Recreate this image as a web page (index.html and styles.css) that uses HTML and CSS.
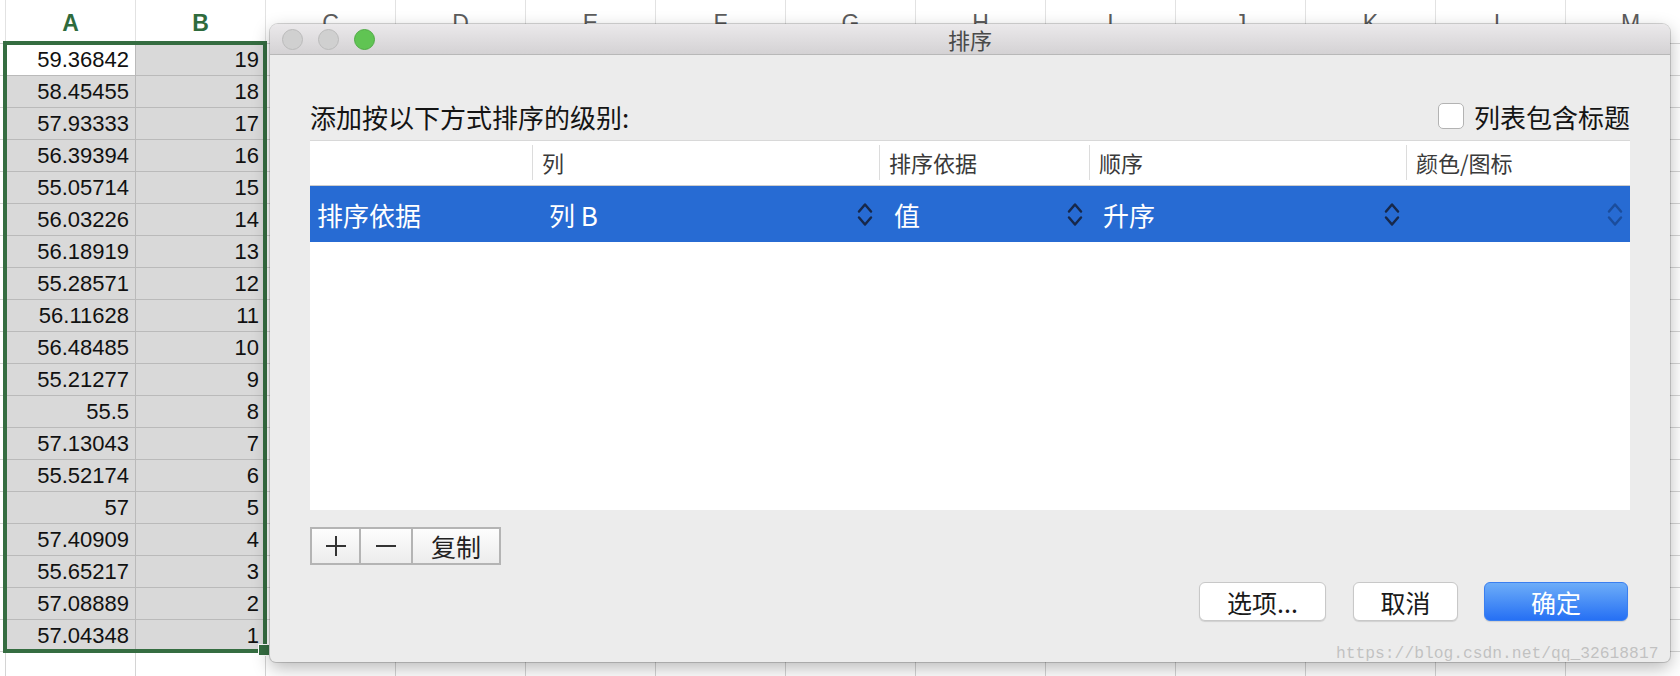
FILE: index.html
```html
<!DOCTYPE html>
<html lang="zh">
<head>
<meta charset="utf-8">
<title>排序</title>
<link rel="stylesheet" href="styles.css">
</head>
<body>
<div class="sheet">
  <div class="hrow">
    <div class="edge"></div>
    <div class="ch on">A</div><div class="ch on">B</div><div class="ch">C</div><div class="ch">D</div><div class="ch">E</div><div class="ch">F</div><div class="ch">G</div><div class="ch">H</div><div class="ch">I</div><div class="ch">J</div><div class="ch">K</div><div class="ch">L</div><div class="ch">M</div>
  </div>
  <div class="row sel"><div class="edge"></div><div class="cell active">59.36842</div><div class="cell">19</div><div class="rest"></div></div>
  <div class="row sel"><div class="edge"></div><div class="cell">58.45455</div><div class="cell">18</div><div class="rest"></div></div>
  <div class="row sel"><div class="edge"></div><div class="cell">57.93333</div><div class="cell">17</div><div class="rest"></div></div>
  <div class="row sel"><div class="edge"></div><div class="cell">56.39394</div><div class="cell">16</div><div class="rest"></div></div>
  <div class="row sel"><div class="edge"></div><div class="cell">55.05714</div><div class="cell">15</div><div class="rest"></div></div>
  <div class="row sel"><div class="edge"></div><div class="cell">56.03226</div><div class="cell">14</div><div class="rest"></div></div>
  <div class="row sel"><div class="edge"></div><div class="cell">56.18919</div><div class="cell">13</div><div class="rest"></div></div>
  <div class="row sel"><div class="edge"></div><div class="cell">55.28571</div><div class="cell">12</div><div class="rest"></div></div>
  <div class="row sel"><div class="edge"></div><div class="cell">56.11628</div><div class="cell">11</div><div class="rest"></div></div>
  <div class="row sel"><div class="edge"></div><div class="cell">56.48485</div><div class="cell">10</div><div class="rest"></div></div>
  <div class="row sel"><div class="edge"></div><div class="cell">55.21277</div><div class="cell">9</div><div class="rest"></div></div>
  <div class="row sel"><div class="edge"></div><div class="cell">55.5</div><div class="cell">8</div><div class="rest"></div></div>
  <div class="row sel"><div class="edge"></div><div class="cell">57.13043</div><div class="cell">7</div><div class="rest"></div></div>
  <div class="row sel"><div class="edge"></div><div class="cell">55.52174</div><div class="cell">6</div><div class="rest"></div></div>
  <div class="row sel"><div class="edge"></div><div class="cell">57</div><div class="cell">5</div><div class="rest"></div></div>
  <div class="row sel"><div class="edge"></div><div class="cell">57.40909</div><div class="cell">4</div><div class="rest"></div></div>
  <div class="row sel"><div class="edge"></div><div class="cell">55.65217</div><div class="cell">3</div><div class="rest"></div></div>
  <div class="row sel"><div class="edge"></div><div class="cell">57.08889</div><div class="cell">2</div><div class="rest"></div></div>
  <div class="row sel"><div class="edge"></div><div class="cell">57.04348</div><div class="cell">1</div><div class="rest"></div></div>
  <div class="row"><div class="edge"></div><div class="cell"></div><div class="cell"></div><div class="rest"></div></div>
</div>

<div class="selection"><div class="handle"></div></div>

<div class="dialog">
  <div class="titlebar">
    <div class="lights"><span class="light"></span><span class="light"></span><span class="light green"></span></div>
    <div class="title">排序</div>
    <div></div>
  </div>
  <div class="body">
    <div class="top">
      <div class="heading">添加按以下方式排序的级别:</div>
      <div class="check"><span class="box"></span><span>列表包含标题</span></div>
    </div>
    <div class="table">
      <div class="thead">
        <div class="th c0"></div>
        <div class="th c1">列</div>
        <div class="th c2">排序依据</div>
        <div class="th c3">顺序</div>
        <div class="th c4">颜色/图标</div>
      </div>
      <div class="tr">
        <div class="td c0">排序依据</div>
        <div class="td c1"><span>列 B</span><svg class="updown" viewBox="0 0 16 28" width="16" height="28"><polyline points="2,11.5 8,4.5 14,11.5"/><polyline points="2,17.5 8,24.5 14,17.5"/></svg></div>
        <div class="td c2"><span>值</span><svg class="updown" viewBox="0 0 16 28" width="16" height="28"><polyline points="2,11.5 8,4.5 14,11.5"/><polyline points="2,17.5 8,24.5 14,17.5"/></svg></div>
        <div class="td c3"><span>升序</span><svg class="updown" viewBox="0 0 16 28" width="16" height="28"><polyline points="2,11.5 8,4.5 14,11.5"/><polyline points="2,17.5 8,24.5 14,17.5"/></svg></div>
        <div class="td c4"><span></span><svg class="updown dim" viewBox="0 0 16 28" width="16" height="28"><polyline points="2,11.5 8,4.5 14,11.5"/><polyline points="2,17.5 8,24.5 14,17.5"/></svg></div>
      </div>
    </div>
    <div class="seg">
      <div class="sb plus"><svg viewBox="0 0 22 22" width="22" height="22"><line x1="11" y1="1" x2="11" y2="21"/><line x1="1" y1="11" x2="21" y2="11"/></svg></div>
      <div class="sb minus"><svg viewBox="0 0 22 22" width="22" height="22"><line x1="1" y1="11" x2="21" y2="11"/></svg></div>
      <div class="sb copy">复制</div>
    </div>
    <div class="actions">
      <div class="btn opt">选项...</div>
      <div class="btn cancel">取消</div>
      <div class="btn ok">确定</div>
    </div>
  </div>
</div>

<div class="watermark">https://blog.csdn.net/qq_32618817</div>
</body>
</html>
```

FILE: styles.css
```css
* { box-sizing: border-box; margin: 0; padding: 0; }
html, body { width: 1680px; height: 676px; overflow: hidden; background: #fff; }
body { position: relative; font-family: "Noto Sans CJK SC", "Noto Sans", sans-serif; }

/* spreadsheet */
.sheet { font-family: "Liberation Sans", Arial, sans-serif; }
.hrow {
  display: grid;
  grid-template-columns: 6px repeat(13, 130px);
  height: 44px;
  border-bottom: 1px solid #d2d2d2;
  background: #fff;
}
.hrow .edge { border-right: 1px solid #e2e2e2; }
.ch {
  border-right: 1px solid #e2e2e2;
  text-align: center;
  font-size: 23px;
  line-height: 46px;
  color: #5c5c5c;
}
.ch.on { color: #2f6b3d; font-weight: bold; }

.row {
  display: grid;
  grid-template-columns: 6px 130px 130px 1fr;
  height: 32px;
}
.row .edge { border-right: 1px solid #d4d4d4; border-bottom: 1px solid #d4d4d4; }
.cell {
  border-right: 1px solid #d4d4d4;
  border-bottom: 1px solid #d4d4d4;
  text-align: right;
  padding-right: 6px;
  font-size: 22px;
  line-height: 31px;
  color: #111;
}
.row.sel .cell { background: #d9d9d9; border-color: #bababa; }
.row.sel .cell.active { background: #fff; }
.rest {
  border-bottom: 1px solid #d4d4d4;
  background: repeating-linear-gradient(to right, transparent 0 129px, #d4d4d4 129px 130px);
}

.selection {
  position: absolute;
  left: 3px;
  top: 41px;
  width: 264px;
  height: 612px;
  border: 4px solid #356d41;
}
.handle {
  position: absolute;
  right: -7px;
  bottom: -7px;
  width: 12px;
  height: 12px;
  background: #356d41;
  border: 1px solid #fff;
}

/* dialog window */
.dialog {
  position: absolute;
  left: 270px;
  top: 24px;
  width: 1400px;
  height: 638px;
  background: #ececec;
  border-radius: 8px 8px 6px 6px;
  box-shadow: 0 0 0 1px rgba(0,0,0,.16), 0 6px 18px rgba(0,0,0,.28);
  display: flex;
  flex-direction: column;
  overflow: hidden;
}
.titlebar {
  height: 31px;
  flex: none;
  display: grid;
  grid-template-columns: 1fr auto 1fr;
  align-items: center;
  background: linear-gradient(#ebe9eb, #d4d2d4);
  border-bottom: 1px solid #b8b8b8;
}
.lights { display: flex; gap: 15px; padding-left: 12px; }
.light {
  width: 21px;
  height: 21px;
  border-radius: 50%;
  background: #d0d0d0;
  border: 1px solid #bababa;
}
.light.green { background: #60c453; border-color: #4fab45; }
.title { font-size: 22px; color: #4a4a4a; line-height: 30px; }

.body {
  flex: 1;
  display: flex;
  flex-direction: column;
  padding: 44px 40px 41px;
}
.top {
  height: 34px;
  margin-bottom: 7px;
  display: flex;
  align-items: center;
  justify-content: space-between;
}
.heading { font-size: 26px; color: #141414; }
.check { display: flex; align-items: center; gap: 10px; font-size: 26px; color: #141414; }
.box {
  width: 26px;
  height: 26px;
  background: #fff;
  border: 1px solid #b3b3b3;
  border-radius: 5px;
}

.table {
  flex: none;
  height: 370px;
  background: #fff;
  border-top: 1px solid #d8d8d8;
}
.thead {
  display: flex;
  height: 45px;
  padding: 4px 0 5px;
  border-bottom: 1px solid #cdcdcd;
}
.th {
  font-size: 22px;
  line-height: 35px;
  color: #3a3a3a;
  padding-left: 9px;
  border-left: 1px solid #dcdcdc;
}
.th.c0 { border-left: none; }
.c0 { width: 222px; flex: none; }
.c1 { width: 347px; flex: none; }
.c2 { width: 210px; flex: none; }
.c3 { width: 317px; flex: none; }
.c4 { width: 224px; flex: none; }

.tr {
  display: flex;
  height: 56px;
  background: #276bd3;
  color: #fff;
  font-size: 26px;
}
.td {
  display: flex;
  align-items: center;
  justify-content: space-between;
  padding-right: 6px;
}
.td.c0 { padding-left: 7px; }
.td.c1 { padding-left: 17px; }
.td.c2 { padding-left: 15px; }
.td.c3 { padding-left: 14px; }
.td.c4 { padding-right: 7px; }
.updown { fill: none; stroke: #17284a; stroke-width: 2.5; stroke-linecap: round; stroke-linejoin: round; }
.updown.dim { stroke: #1b4d9c; }

.seg {
  align-self: flex-start;
  display: flex;
  height: 38px;
  margin-top: 17px;
  border: 2px solid #b4b4b4;
  background: linear-gradient(#fdfdfd, #ececec);
}
.sb {
  display: flex;
  align-items: center;
  justify-content: center;
  font-size: 25px;
  color: #222;
}
.sb + .sb { border-left: 2px solid #b4b4b4; }
.sb svg { stroke: #333; stroke-width: 2; }
.plus { width: 47px; }
.minus { width: 52px; }
.copy { width: 88px; }

.actions {
  margin-top: 17px;
  display: flex;
  justify-content: flex-end;
  padding-right: 2px;
}
.btn {
  height: 39px;
  display: flex;
  align-items: center;
  justify-content: center;
  font-size: 25px;
  color: #1a1a1a;
  background: #fff;
  border: 1px solid #c8c8c8;
  border-radius: 6px;
  box-shadow: 0 1px 1px rgba(0,0,0,.12);
}
.opt { width: 127px; }
.cancel { width: 105px; margin-left: 27px; }
.ok {
  width: 144px;
  margin-left: 26px;
  color: #fff;
  background: linear-gradient(#6dadf8, #2670f4);
  border-color: #3a7ff0;
}

.watermark {
  position: absolute;
  left: 1336px;
  top: 644px;
  font-family: "Liberation Mono", monospace;
  font-size: 16.3px;
  line-height: 20px;
  color: rgba(150,150,150,.5);
  white-space: nowrap;
}
```
